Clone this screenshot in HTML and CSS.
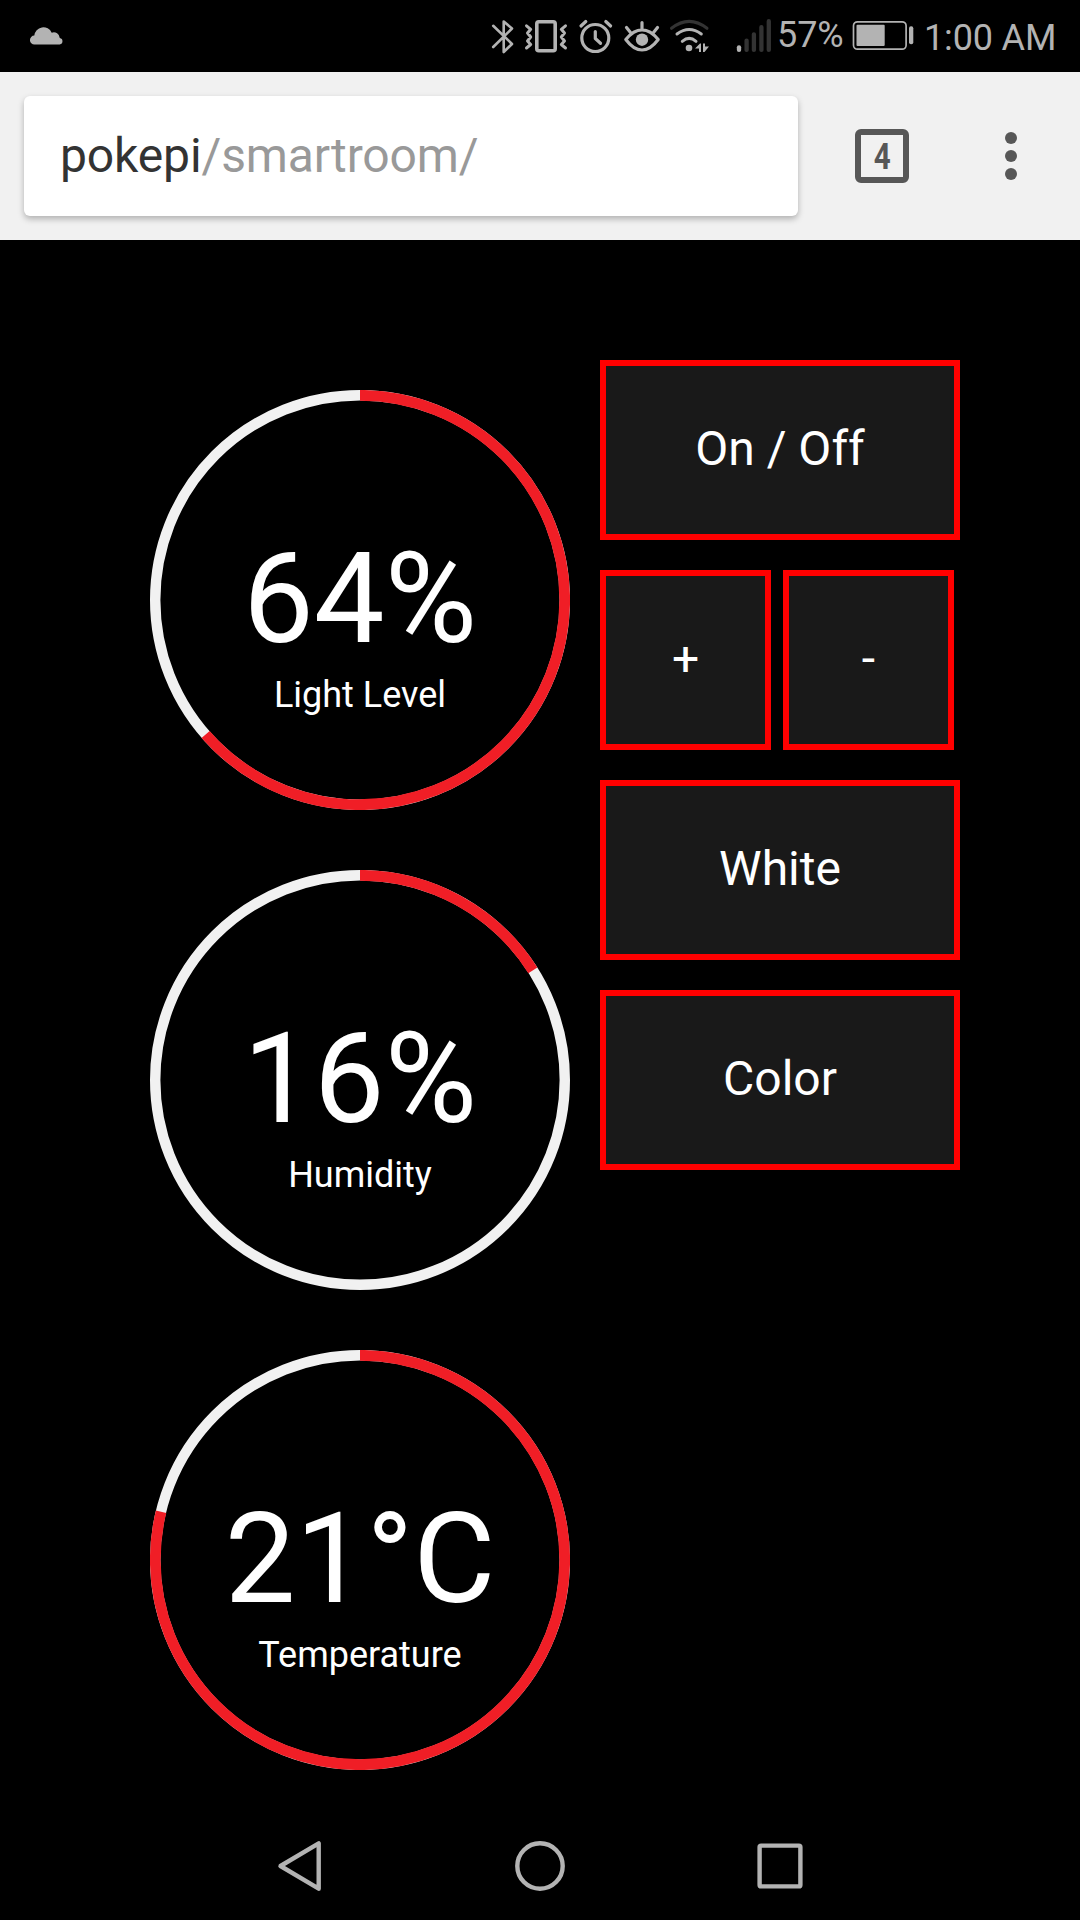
FILE: index.html
```html
<!DOCTYPE html>
<html lang="en">
<head>
<meta charset="utf-8">
<title>Smart Room</title>
<link rel="stylesheet" href="styles.css">
</head>
<body>
<div class="phone">
  <header class="status">
    <svg class="cloud" width="36" height="72" viewBox="29 0 36 72"><path d="M34.5 44.5a4.3 4.3 0 0 1-.2-8.900A9.100 9.100 0 0 1 51.700 32.700a6 6 0 0 1 8.100 5.300A3.300 3.300 0 0 1 59.700 44.500Z" fill="#b3b3b3"/></svg>
    <div class="status-right">
      <svg class="line" width="32" height="72" viewBox="488 0 32 72"><path d="M493.200 25.800 512 44l-8.300 8V21.500l8.300 7L493.200 47" stroke-width="2.600"/></svg>
      <svg class="line" width="52" height="72" viewBox="520 0 52 72"><rect x="536.800" y="21.800" width="18.400" height="29" rx="2" stroke-width="3.600"/><path d="M526.500 25.800 530.700 29.300 527.500 33 530.700 37 527.500 41 530.700 44.500 526.500 48M565.500 25.800 561.300 29.300 564.500 33 561.300 37 564.500 41 561.300 44.500 565.500 48" stroke-width="3"/></svg>
      <svg class="line" width="46" height="72" viewBox="572 0 46 72"><circle cx="595.300" cy="38" r="13.500" stroke-width="3.200"/><path d="M595.300 31.500V38.500L600.500 43.300M581 26 585.800 21.500M605.800 21.500 610.600 26" stroke-width="3.200"/></svg>
      <svg class="line" width="46" height="72" viewBox="618 0 46 72"><path d="M625.800 39.500C631 33 636 29.800 642 29.800S653 33 658.200 39.500C653 46.500 648 50 642 50S631 46.500 625.800 39.500ZM642 22.500V29M626.500 27.500 630.500 32.500M657.500 27.500 653.500 32.500" stroke-width="3.200"/><circle class="solid" cx="642" cy="39.700" r="6.200"/></svg>
      <svg class="line" width="66" height="72" viewBox="664 0 66 72"><path class="dim" d="M671.500 28.300Q689.200 14.500 707 28.300" stroke-width="3"/><path d="M677 34Q689.200 25 701.300 34M682.300 41.300Q689.200 35.500 696 41.300" stroke-width="3"/><circle class="solid" cx="689" cy="48" r="3.300"/><path class="solid" d="M695 48.500 700 43.500H701V52H699V48.500ZM703 43.500H705V46.500H709L704.500 52H703Z"/></svg>
      <svg class="line" width="48" height="72" viewBox="730 0 48 72"><path d="M739 47.300V49.900" stroke-width="4.300"/><path class="dim" d="M746.600 40.600V49.900M753.900 34.300V49.900M761.400 27.200V49.900M768.800 21.200V49.900" stroke-width="4.300"/></svg>
      <span class="percent">57%</span>
      <svg class="line" width="66" height="72" viewBox="850 0 66 72"><rect x="853.500" y="21.800" width="52.600" height="27.400" rx="4" stroke-width="1.700"/><rect class="solid" x="856.500" y="24.800" width="28.200" height="21.200" rx="1"/><rect class="solid" x="909" y="26.300" width="4.300" height="18" rx="2"/></svg>
      <span class="time">1:00 AM</span>
    </div>
  </header>
  <div class="toolbar">
    <div class="url"><span class="host">pokepi</span><span>/smartroom/</span></div>
    <div class="tabs"><span class="count">4</span></div>
    <div class="menu"><i></i><i></i><i></i></div>
  </div>
  <main class="room">
    <section class="gauges">
      <div class="gauge">
        <svg class="ring" viewBox="0 0 420 420"><circle class="track" cx="210" cy="210" r="204.800"/><circle class="value" cx="210" cy="210" r="204.700" pathLength="100" stroke-dasharray="63.600 100"/></svg>
        <div class="reading"><strong>64%</strong><span>Light Level</span></div>
      </div>
      <div class="gauge">
        <svg class="ring" viewBox="0 0 420 420"><circle class="track" cx="210" cy="210" r="204.800"/><circle class="value" cx="210" cy="210" r="204.700" pathLength="100" stroke-dasharray="16 100"/></svg>
        <div class="reading"><strong>16%</strong><span>Humidity</span></div>
      </div>
      <div class="gauge">
        <svg class="ring" viewBox="0 0 420 420"><circle class="track" cx="210" cy="210" r="204.800"/><circle class="value" cx="210" cy="210" r="204.700" pathLength="100" stroke-dasharray="78.800 100"/></svg>
        <div class="reading"><strong>21°C</strong><span>Temperature</span></div>
      </div>
    </section>
    <section class="controls">
      <button>On / Off</button>
      <div class="pair"><button>+</button><button>-</button></div>
      <button>White</button>
      <button>Color</button>
    </section>
  </main>
  <nav class="nav">
    <svg class="line" width="60" height="60" viewBox="0 0 60 60"><path d="M48.700 7.300V52.700L10.500 30Z" stroke-width="4.400"/></svg>
    <svg class="line" width="60" height="60" viewBox="0 0 60 60"><circle cx="30" cy="30" r="22.700" stroke-width="4.400"/></svg>
    <svg class="line" width="60" height="60" viewBox="0 0 60 60"><rect x="9.600" y="9.600" width="40.800" height="40.800" rx="1.500" stroke-width="4.400"/></svg>
  </nav>
</div>
</body>
</html>
```
FILE: styles.css
```css
* { box-sizing: border-box; }
body { margin: 0; background: #000; font-family: Roboto, "Noto Sans", sans-serif; }
svg { display: block; flex: none; }
.phone { width: 1080px; height: 1920px; display: flex; flex-direction: column; overflow: hidden; background: #000; }

.status { height: 72px; flex: none; display: flex; justify-content: space-between; padding-left: 29px; color: #b3b3b3; font-size: 36px; white-space: nowrap; }
.status-right { display: flex; width: 592px; }
.percent { width: 73px; margin-left: -1px; line-height: 70px; letter-spacing: -.1px; }
.time { padding-left: 8px; line-height: 76px; letter-spacing: -.15px; }
.line { fill: none; stroke: #b3b3b3; stroke-linecap: round; stroke-linejoin: round; }
.line .solid { fill: #b3b3b3; stroke: none; }
.line .dim { stroke: #333; }

.toolbar { height: 168px; flex: none; display: flex; align-items: center; padding: 24px; background: #f1f1f1; }
.url { width: 774px; height: 120px; padding-left: 36px; border-radius: 6px; background: #fff; box-shadow: 0 3px 6px rgba(0, 0, 0, .27); color: #999; font-size: 48px; line-height: 120px; letter-spacing: -.13px; }
.host { color: #333; }
.tabs { width: 54px; height: 54px; margin-left: 57px; border: 6px solid #575757; border-radius: 6px; color: #575757; font-size: 36px; font-weight: 700; line-height: 44px; text-align: center; }
.count { display: inline-block; transform: scaleX(.82); }
.menu { display: flex; flex-direction: column; gap: 6px; margin-left: 96px; }
.menu i { width: 12px; height: 12px; border-radius: 50%; background: #575757; }

.room { flex: 1; display: flex; align-items: flex-start; gap: 30px; padding: 120px 120px 0 150px; color: #fff; }
.gauges { display: flex; flex-direction: column; gap: 60px; padding-top: 30px; }
.gauge { width: 420px; height: 420px; display: grid; }
.gauge > * { grid-area: 1 / 1; }
.ring { width: 420px; height: 420px; transform: rotate(-90deg); fill: none; }
.track { stroke: #f1f1f1; stroke-width: 10.400; }
.value { stroke: #f01e26; stroke-width: 10.700; }
.reading { display: flex; flex-direction: column; align-items: center; padding-top: 135px; }
.reading strong { font-size: 126px; font-weight: 400; line-height: 148px; }
.reading span { font-size: 36px; line-height: 42px; margin-top: 1px; }

.controls { width: 360px; display: flex; flex-direction: column; gap: 30px; }
.controls button { width: 360px; height: 180px; padding: 0 0 3px; border: 6px solid #f00; border-radius: 0; background: #191919; color: #fff; font: 48px Roboto, "Noto Sans", sans-serif; }
.pair { display: flex; gap: 12px; }
.pair button { width: 171px; }

.nav { height: 108px; flex: none; display: flex; justify-content: space-between; align-items: center; padding: 0 270px; }
```
